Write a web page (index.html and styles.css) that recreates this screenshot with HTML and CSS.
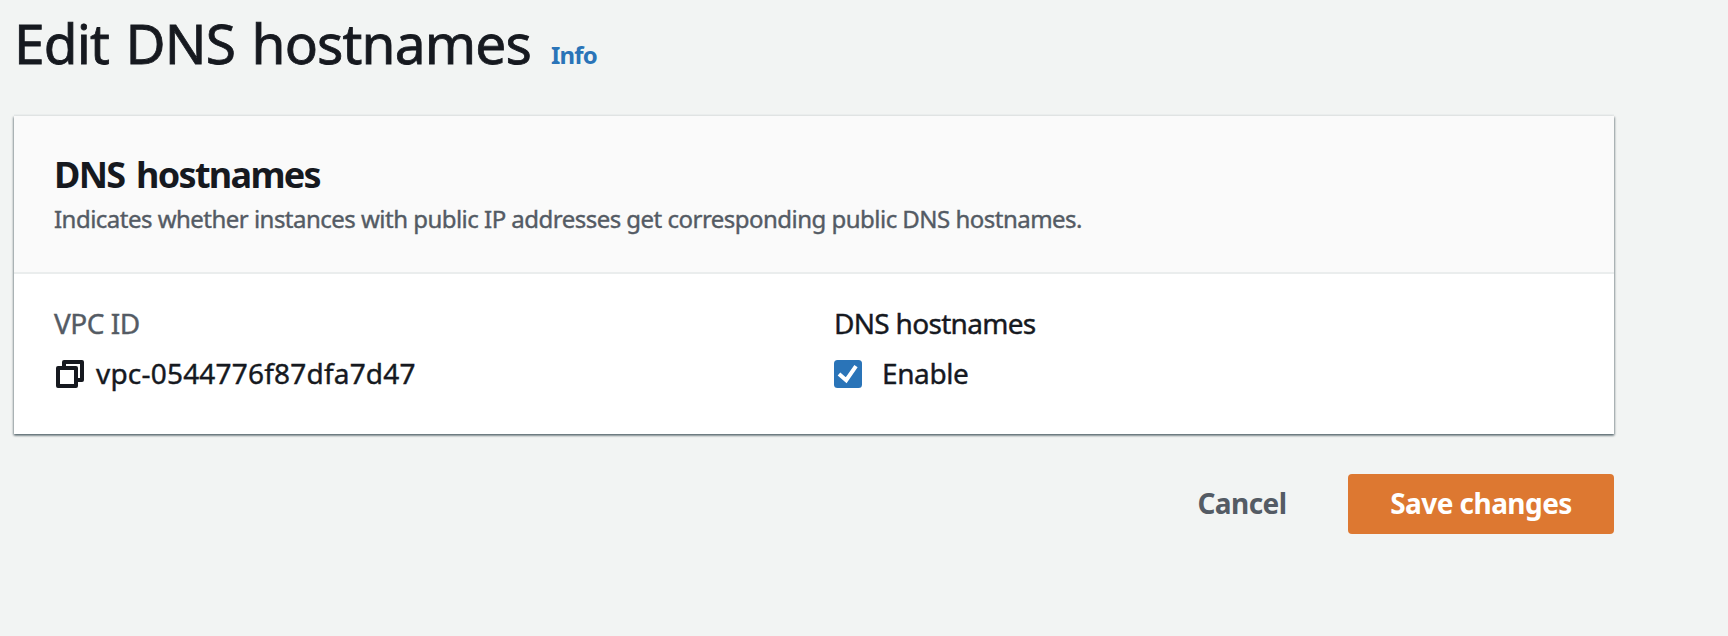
FILE: index.html
```html
<!DOCTYPE html>
<html lang="en">
<head>
<meta charset="utf-8">
<title>Edit DNS hostnames</title>
<link rel="stylesheet" href="styles.css">
</head>
<body>
<main class="page">
  <header class="page-header">
    <h1 class="page-title">Edit DNS hostnames</h1>
    <a class="info">Info</a>
  </header>
  <section class="card">
    <div class="card-header">
      <h2 class="card-title">DNS hostnames</h2>
      <p class="card-description">Indicates whether instances with public IP addresses get corresponding public DNS hostnames.</p>
    </div>
    <div class="card-body">
      <div class="field">
        <div class="label label-muted"><span class="t-vpc">VPC ID</span></div>
        <div class="value">
          <svg class="icon copy" viewBox="0 0 28 28" fill="none" stroke="#16191f" stroke-width="4" stroke-linejoin="round"><path d="M2 8h18v18H2z"/><path d="M8 8V2h18v18h-6"/></svg>
          <span class="t-id">vpc-0544776f87dfa7d47</span>
        </div>
      </div>
      <div class="field">
        <div class="label"><span class="t-label">DNS hostnames</span></div>
        <div class="value">
          <svg class="icon check" viewBox="0 0 28 28" fill="none"><rect width="28" height="28" rx="3.5" fill="#2a74b8"/><path d="M5 14l7.2 6.2L22 6.2" stroke="#fff" stroke-width="4"/></svg>
          <span class="t-enable">Enable</span>
        </div>
      </div>
    </div>
  </section>
  <footer class="actions">
    <button class="button cancel">Cancel</button>
    <button class="button save">Save changes</button>
  </footer>
</main>
</body>
</html>
```
FILE: styles.css
```css
* { box-sizing: border-box; }
body {
  margin: 0;
  background: #f2f4f3;
  color: #16191f;
  font-family: "Noto Sans", "Open Sans", sans-serif;
}
h1, h2, p { margin: 0; font-weight: 400; white-space: nowrap; }
.page { width: 1614px; padding-left: 14px; }
.page-header { display: flex; align-items: baseline; height: 116px; padding-top: 7px; }
.page-title { width: 537px; font-size: 55px; line-height: 72px; letter-spacing: -.85px; word-spacing: 3px; -webkit-text-stroke: .8px; }
.info { color: #2a74b8; font-size: 24px; font-weight: 700; line-height: 32px; letter-spacing: -.8px; }
.card {
  height: 318px;
  background: #fff;
  box-shadow: 0 2px 2px 0 rgba(0, 28, 36, .3), 1px 1px 2px 0 rgba(0, 28, 36, .3), -1px 1px 2px 0 rgba(0, 28, 36, .3), 0 -2px 0 0 #eaeded;
}
.card-header { height: 158px; padding: 35px 40px 0; background: #fafafa; border-bottom: 2px solid #eaeded; }
.card-title { font-size: 36px; font-weight: 700; line-height: 48px; letter-spacing: -1.7px; word-spacing: 4px; }
.card-description { padding-top: 2px; color: #545b64; font-size: 24px; line-height: 36px; letter-spacing: -.52px; -webkit-text-stroke: .4px; }
.card-body { display: grid; grid-template-columns: 780px 1fr; padding: 29px 40px 0; }
.label { height: 40px; font-size: 28px; line-height: 40px; white-space: nowrap; -webkit-text-stroke: .4px; }
.label-muted { color: #545b64; }
.value { display: flex; align-items: center; height: 40px; margin-top: 11px; font-size: 28px; line-height: 38px; white-space: nowrap; -webkit-text-stroke: .4px; }
.value span { padding-bottom: 2px; }
.icon { width: 28px; height: 28px; flex: none; }
.copy { margin: 0 12px 0 2px; }
.check { margin-right: 20px; }
.t-vpc { letter-spacing: -.5px; }
.t-id { letter-spacing: .2px; }
.t-label { letter-spacing: -.7px; }
.t-enable { letter-spacing: -.4px; }
.actions { display: flex; justify-content: flex-end; margin-top: 40px; }
.button {
  height: 60px;
  padding: 0 0 2px;
  border: 0;
  border-radius: 4px;
  background: none;
  color: #545b64;
  font: 700 28px/58px "Noto Sans", "Open Sans", sans-serif;
  letter-spacing: -.55px;
  white-space: nowrap;
}
.cancel { width: 212px; }
.save { width: 266px; background: #dd7831; color: #fff; }
```
